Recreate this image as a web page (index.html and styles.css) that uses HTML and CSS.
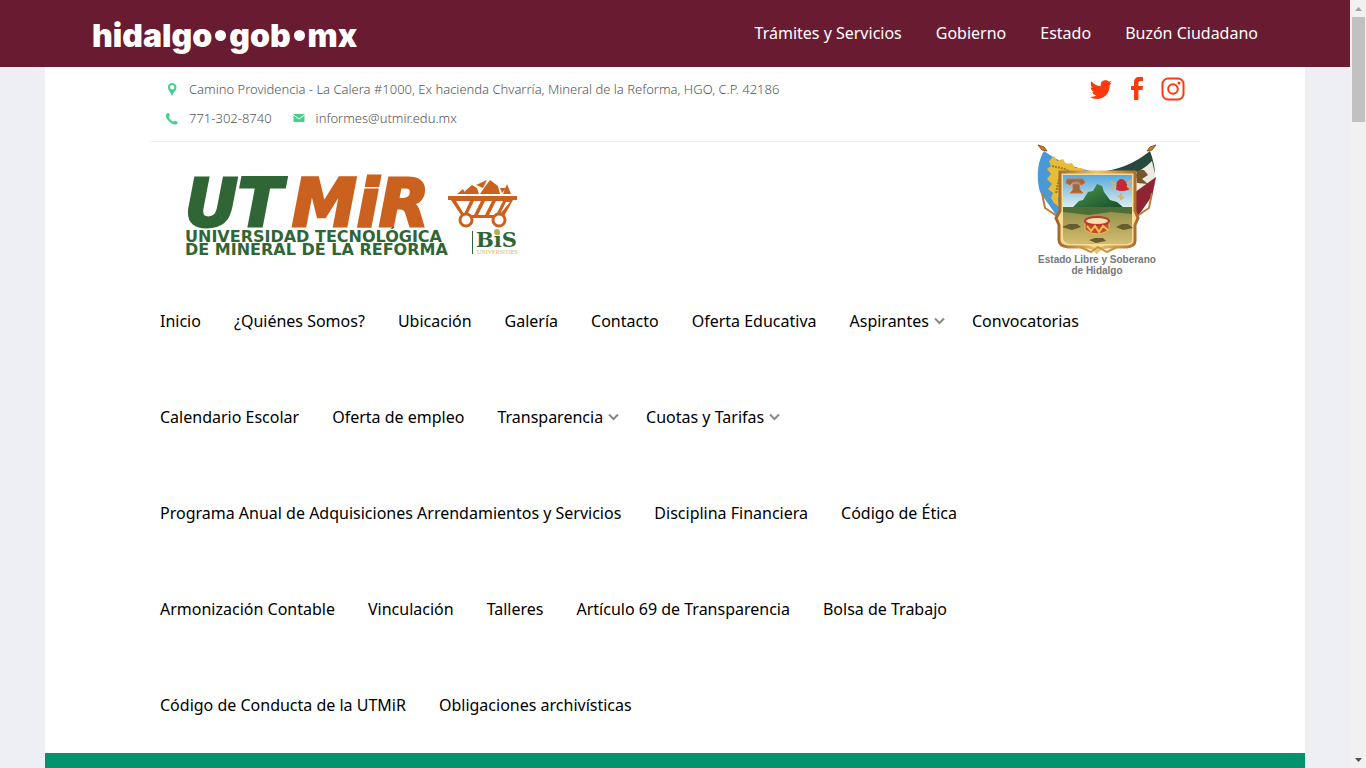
FILE: index.html
```html
<!DOCTYPE html>
<html lang="es">
<head>
<meta charset="utf-8">
<title>UTMiR</title>
<link rel="stylesheet" href="styles.css">
</head>
<body>
<div class="window">
  <div class="page">
    <header class="gov">
      <a class="gov-logo" href="#" aria-label="hidalgo.gob.mx">hidalgo<span class="dot"></span>gob<span class="dot"></span>mx</a>
      <nav class="gov-nav" aria-label="Gobierno">
        <a href="#">Trámites y Servicios</a>
        <a href="#">Gobierno</a>
        <a href="#">Estado</a>
        <a href="#">Buzón Ciudadano</a>
      </nav>
    </header>
    <main class="sheet">
      <div class="topbar">
        <ul class="contact">
          <li class="address"><svg class="ico" viewBox="0 0 14 14"><path fill-rule="evenodd" d="M7 0C4.500 0 3 1.700 3 4.200 3 7.500 6 9 7 13.500 8 9 11.500 7.500 11.500 4.200 11.500 1.700 9.500 0 7 0ZM7.200 2a2.200 2.200 0 1 1 0 4.400 2.200 2.200 0 0 1 0-4.400Z"/></svg>Camino Providencia - La Calera #1000, Ex hacienda Chvarría, Mineral de la Reforma, HGO, C.P. 42186</li>
          <li><svg class="ico" viewBox="0 0 14 14"><path d="M1.500 2C3 .5 4 1 4.500 2.500 5 4 4.500 4.500 3.800 5.200 5 7.300 6.500 8.700 8.500 9.700 9.300 8.700 10 8.500 11.500 9.300 13 10 13 11 12 12 8.500 15-2 5.500 1.500 2Z"/></svg>771-302-8740</li>
          <li><svg class="ico" viewBox="0 0 14 14"><path d="M1.500 2H12.500V10H1.500Z"/><path d="M1.500 3 7 7 12.500 3" fill="none" stroke="#fff"/></svg>informes@utmir.edu.mx</li>
        </ul>
        <div class="social">
          <a href="#" aria-label="Twitter"><svg viewBox="0 0 24 24"><path d="M1 20c3 0 5-.5 6.500-1.700-2.200-.2-3.700-1.300-4.200-3.200h1.900C3 14.300 1.700 12.600 1.700 10.300l1.900.5C1.600 9.300 1.200 6.600 2.300 4.300c2.500 3 5.600 4.700 9.500 4.900C11.200 5.500 13.300 3.300 16.300 3.300c1.500 0 2.600.5 3.500 1.400l2.700-1-1.800 2.500 2-.5-2 2.300C20.800 16.500 15 22 8 22 5 22 3 21.200 1 20Z"/></svg></a>
          <a href="#" aria-label="Facebook"><svg viewBox="0 0 24 24"><path d="M6 9h3V5.500C9 2 11 0 14 0h4v4h-2.500C14 4 13.400 4.700 13.400 6v3H18l-.5 4h-4.100v10H9V13H6Z"/></svg></a>
          <a href="#" aria-label="Instagram"><svg viewBox="0 0 24 24"><rect class="line" x="1.500" y="1.500" width="21" height="21" rx="5.500"/><circle class="line" cx="12" cy="12" r="4.800"/><circle cx="18" cy="6" r="1.500"/></svg></a>
        </div>
      </div>
      <div class="brands">
        <a class="utmir" href="#" aria-label="Universidad Tecnológica de Mineral de la Reforma">
          <svg viewBox="0 0 336 84">
            <text class="mark green" x="0" y="52">UT</text>
            <text class="mark orange" x="107" y="52">MiR</text>
            <text class="uni green" x="0" y="68">UNIVERSIDAD TECNOLÓGICA</text>
            <text class="uni green" x="0" y="81">DE MINERAL DE LA REFORMA</text>
            <rect class="green" x="287" y="57" width="1" height="23"/>
            <text class="bis green" x="291" y="73">BiS</text>
            <text class="small" x="292" y="80">UNIVERSITIES</text>
            <g class="orange" transform="translate(0 1)"><path fill-rule="evenodd" d="M263 21H332V25H328L318 43H278L266 25H263ZM271 26 279 39 285 26ZM289 26 282 40H289L296 26ZM300 26 293 40H300L307 26ZM311 26 304 40H311L318 26ZM321 27 315 39 325 27Z"/><path d="M272 19 278 14 281 19ZM280 16 287 10 292 13 294 19H280ZM291 10 302 5 298 13ZM299 13 305 5 313 11 315 19H295ZM315 13 321 13 317 18ZM318 19 322 9 326 19Z"/></g>
            <g class="wheel"><circle cx="281" cy="46" r="6"/><circle cx="314" cy="46" r="6"/></g>
            <circle cx="312" cy="58" r="3" fill="#b0b456"/>
          </svg>
        </a>
        <figure class="seal">
          <svg viewBox="0 0 120 110">
            <defs>
              <linearGradient id="sky" x2="0" y2="1"><stop stop-color="#58a9dc"/><stop offset="1" stop-color="#e4f1ef"/></linearGradient>
              <linearGradient id="land" x2="0" y2="1"><stop stop-color="#8e8c47"/><stop offset="1" stop-color="#d4bd70"/></linearGradient>
              <linearGradient id="hill" x2="1" y2="1"><stop stop-color="#4d994e"/><stop offset="1" stop-color="#164b29"/></linearGradient>
              <linearGradient id="gold"><stop stop-color="#9c6429"/><stop offset=".5" stop-color="#edc46a"/><stop offset="1" stop-color="#a9682b"/></linearGradient>
            </defs>
            <path d="M7 7C-1 20 0 38 3 48L24 78 34 34 58 28C38 24 20 17 7 7Z" fill="#4a98d4"/>
            <path d="M12 17 17 12 20 17 26 15 29 20 35 19 38 24 45 24 48 29 35 34 21 54 22 63 17 59 14 54 16 49 11 45 15 40 10 35 14 30 10 25 14 22Z" fill="#e7bd38"/>
            <path d="M15 22 28 25 35 29 22 35 19 49" fill="none" stroke="#a27923" stroke-width="2" stroke-dasharray="2 1"/>
            <path d="M113 7Q90 26 60 28L90 34 96 76 115 51Q122 30 113 7Z" fill="#28493b"/>
            <path d="M115 17Q104 29 87 32L97 60 116 46 119 34Z" fill="#eeeae1"/><path d="M119 33 97 49V78L115 52Z" fill="#8f2432"/>
            <path d="M99 31Q100 25 107 26L111 31 105 35 111 40 100 39Z" fill="#76562b"/>
            <path d="M1 1 7 3 10 7 5 6ZM119 1 113 3 110 7 115 6Z" fill="#d67924" stroke="#925522"/>
            <path d="M5 49 8 64 20 72M115 49 112 64 100 72" fill="none" stroke="#b97a35" stroke-width="2"/>
            <path d="M23 28H98V67L101 74 98 81V97Q98 102 90 103H72Q63 103 60 108 57 103 48 103H31Q22 102 22 96V81L19 74 23 67Z" fill="#f8dc96" stroke="url(#gold)" stroke-width="3"/>
            <path d="M26 31H95V65H26Z" fill="url(#sky)"/><path d="M26 64H95V96Q95 100 88 100H33Q26 99 26 94Z" fill="url(#land)"/>
            <path d="M35 64 42 57 46 56 51 48 56 47 60 40 65 42 67 48 73 56 80 58 87 64Z" fill="url(#hill)"/><path d="M26 63H95V70L74 68 52 71 26 68Z" fill="#4c6f39"/>
            <g fill="#9e6840" stroke="#cd7042"><path d="M30 35H46L48 39 44 41 42 38H36L33 41 29 39Z"/><path d="M36 40H42L43 46 46 49H33L36 46Z"/></g>
            <path d="M80 44C78 34 89 32 90 43L92 45Q84 48 79 45Z" fill="#c72832" stroke="#c72832"/><path d="M74 37 79 41M94 36 90 40M74 45 79 42M94 45 90 42M84 49V56M81 52 87 54" stroke="#d9b368" stroke-width="2"/>
            <path d="M48 77V86Q60 94 72 86V77Z" fill="#c34c2b" stroke="#edc252"/><ellipse cx="60" cy="77" rx="12" ry="4" fill="#f4dfaf" stroke="#b9382b" stroke-width="2"/><path d="M50 82 54 87 58 82 62 88 66 82 71 86" fill="none" stroke="#f0c44c" stroke-width="2"/>
            <g fill="#675c2f"><path d="M25 83 32 80H40L44 83 35 86ZM79 83 85 80H91L96 84 86 86ZM52 96 58 94H66L69 97 59 99Z"/></g>
            <path d="M43 103 54 108 61 103 70 108 80 103" fill="none" stroke="#c69445" stroke-width="2"/>
          </svg>
          <figcaption>Estado Libre y Soberano<br>de Hidalgo</figcaption>
        </figure>
      </div>
      <nav class="menu" aria-label="Principal">
        <a href="#">Inicio</a>
        <a href="#">¿Quiénes Somos?</a>
        <a href="#">Ubicación</a>
        <a href="#">Galería</a>
        <a href="#">Contacto</a>
        <a href="#">Oferta Educativa</a>
        <a class="has-sub" href="#">Aspirantes<svg viewBox="0 0 11 8"><path d="M1 1.500 5.500 6 10 1.500"/></svg></a>
        <a href="#">Convocatorias</a>
        <a href="#">Calendario Escolar</a>
        <a href="#">Oferta de empleo</a>
        <a class="has-sub" href="#">Transparencia<svg viewBox="0 0 11 8"><path d="M1 1.500 5.500 6 10 1.500"/></svg></a>
        <a class="has-sub" href="#">Cuotas y Tarifas<svg viewBox="0 0 11 8"><path d="M1 1.500 5.500 6 10 1.500"/></svg></a>
        <a href="#">Programa Anual de Adquisiciones Arrendamientos y Servicios</a>
        <a href="#">Disciplina Financiera</a>
        <a href="#">Código de Ética</a>
        <a href="#">Armonización Contable</a>
        <a href="#">Vinculación</a>
        <a href="#">Talleres</a>
        <a href="#">Artículo 69 de Transparencia</a>
        <a href="#">Bolsa de Trabajo</a>
        <a href="#">Código de Conducta de la UTMiR</a>
        <a href="#">Obligaciones archivísticas</a>
      </nav>
      <div class="banner"></div>
    </main>
  </div>
  <div class="scrollbar" aria-hidden="true">
    <svg viewBox="0 0 16 17"><path d="M5 11H12L8.500 7Z" fill="#a3a3a3"/></svg>
    <div class="thumb"></div>
    <svg class="down" viewBox="0 0 16 17"><path d="M5 7H12L8.500 11Z" fill="#505050"/></svg>
  </div>
</div>
</body>
</html>
```
FILE: styles.css
```css
* { box-sizing: border-box; }
body { margin: 0; background: #edeff4; color: #000; font-family: "Noto Sans", "Open Sans", sans-serif; font-size: 16px; }
a { color: inherit; text-decoration: none; }
.window { display: flex; height: 100vh; overflow: hidden; }
.page { flex: 1; display: flex; flex-direction: column; min-width: 0; }
.gov { display: flex; align-items: center; justify-content: space-between; flex: none; padding: 20px 92px; background: #691b31; color: #fff; }
.gov-logo { display: flex; align-items: center; gap: 3px; padding-top: 4px; font: 900 32px/23px Inter, sans-serif; }
.dot { width: 11px; height: 11px; border-radius: 50%; background: #fff; }
.gov-nav { display: flex; gap: 34px; line-height: 27px; }
.sheet { flex: 1; display: flex; flex-direction: column; margin: 0 45px; background: #fff; }
.topbar { display: flex; justify-content: space-between; align-items: flex-start; margin: 0 105px; padding: 8px 15px; border-bottom: 1px solid #f0f0f0; }
.contact { display: flex; flex-wrap: wrap; flex: 0 1 700px; gap: 0 20px; margin: 0; padding: 0; list-style: none; color: #555; font-weight: 300; font-size: 13px; line-height: 29px; }
.contact li { display: flex; align-items: center; }
.contact .address { flex-basis: 100%; }
.ico { width: 14px; height: 14px; margin-right: 10px; fill: #45d18d; }
.social { display: flex; gap: 12px; padding-top: 2px; }
.social svg { display: block; width: 24px; height: 24px; fill: #fe390c; }
.line { fill: none; stroke: #fe390c; stroke-width: 2px; }
.brands { display: flex; justify-content: space-between; align-items: flex-start; margin: 0 148px 0 140px; }
.utmir { padding-top: 32px; }
.utmir svg { display: block; width: 336px; overflow: visible; }
.green { fill: #306536; }
.orange { fill: #ca611f; }
.mark { font: italic bold 65px "DejaVu Sans", sans-serif; stroke-width: 3px; }
.mark.green { stroke: #306536; }
.mark.orange { stroke: #ca611f; }
.uni { font: bold 16px "DejaVu Sans", sans-serif; }
.bis { font: bold 21px "DejaVu Serif", serif; }
.small { font: 6px "Liberation Serif", serif; fill: #cdb36c; }
.wheel { fill: #fff; stroke: #ca611f; stroke-width: 3px; }
.seal { margin: 0; padding-top: 2px; color: #777; font: bold 10px/11px "Liberation Sans", sans-serif; text-align: center; }
.seal svg { display: block; width: 120px; margin: 0 auto; }
.menu { display: flex; flex-wrap: wrap; margin: -3px 145px 0 99px; line-height: 96px; }
.menu a { display: flex; align-items: center; padding: 0 17px 0 16px; white-space: nowrap; }
.menu .has-sub { padding-right: 11px; }
.menu svg { width: 11px; margin-left: 5px; fill: none; stroke: #888; stroke-width: 2px; }
.banner { flex: 1; min-height: 16px; background: #03936f; }
.scrollbar { flex: none; display: flex; flex-direction: column; width: 16px; background: #f1f1f1; }
.scrollbar svg { display: block; width: 16px; height: 17px; }
.scrollbar .down { margin-top: auto; }
.thumb { height: 105px; margin: 0 1px 0 2px; background: #c1c1c1; }
```
